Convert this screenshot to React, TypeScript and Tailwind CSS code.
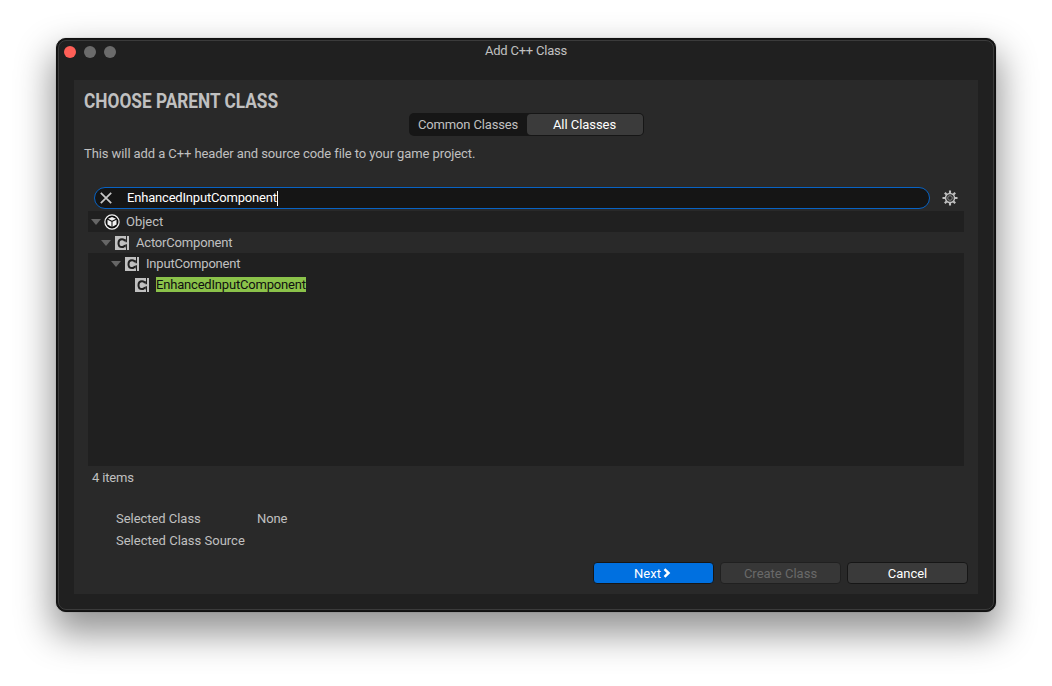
import React from "react";

function ComponentIcon() {
  return (
    <svg width="14" height="14" viewBox="0 0 14 14" className="block shrink-0">
      <path fill="#c0c0c0" d="M0 0H11V3H10.4V11.4H11V14H0Z" />
      <path fill="none" stroke="#202020" strokeWidth="2" d="M10 5.2C9.6 3.8 8.6 3.2 7 3.2C4.8 3.2 3.5 4.6 3.5 7.2S4.8 11.1 7 11.1C8.6 11.1 9.6 10.4 10 9" />
      <path fill="#c0c0c0" d="M12 0H14V14H12V8.3H8.5V6.2H12Z" />
    </svg>
  );
}

function ObjectIcon() {
  return (
    <svg width="16" height="16" viewBox="0 0 16 16" className="block shrink-0">
      <circle cx="8" cy="8" r="7.1" fill="#0c0c0c" stroke="#f2f2f2" strokeWidth="1.2" />
      <path fill="#f2f2f2" d="M8 3L12 4.8L8 6.8L4 4.8ZM3.5 5.8L7.5 7.8V12.8L3.5 10.6ZM12.5 5.8L8.5 7.8V12.8L12.5 10.6Z" />
    </svg>
  );
}

function Arrow() {
  return (
    <svg width="10" height="6" viewBox="0 0 10 6" className="block shrink-0">
      <path d="M0 0H10L5 6Z" fill="#666666" />
    </svg>
  );
}

function Gear() {
  return (
    <svg width="16" height="16" viewBox="0 0 16 16" className="block">
      <g stroke="#c0c0c0" strokeWidth="2.1">
        <path d="M8 .5V3.5M8 12.5V15.5M.5 8H3.5M12.5 8H15.5M2.8 2.8L4.8 4.8M11.2 11.2L13.2 13.2M13.2 2.8L11.2 4.8M4.8 11.2L2.8 13.2" />
      </g>
      <circle cx="8" cy="8" r="4.5" fill="#292929" stroke="#c0c0c0" strokeWidth="1.5" />
      <circle cx="8" cy="8" r="2.3" fill="none" stroke="#8a8a8a" strokeWidth="1" />
    </svg>
  );
}

export default function App() {
  return (
    <div className="h-[686px] w-[1052px] overflow-hidden bg-white px-14 pt-[38px] font-['Roboto',sans-serif] text-[13px] leading-[21px] tracking-normal text-[#c0c0c0]">
      <div className="h-[574px] w-[940px] rounded-[10px] border border-[#101010] bg-[#151515] p-px shadow-[0_0_1px_rgba(0,0,0,0.5),0_18px_36px_4px_rgba(0,0,0,0.42)]">
        <div className="flex h-[570px] flex-col rounded-[8px] border border-[#3b3b3b] bg-[#202020]">
          <header className="flex h-[39px] shrink-0 items-start">
            <div className="flex w-[200px] gap-2 pt-[5px] pl-[5px]">
              <span className="size-3 rounded-full bg-[#ff5f57]" />
              <span className="size-3 rounded-full bg-[#6b6b6b]" />
              <span className="size-3 rounded-full bg-[#6b6b6b]" />
            </div>
            <div className="flex-1 text-center leading-[19px] tracking-[-0.22px]">Add C++ Class</div>
            <div className="w-[200px]" />
          </header>
          <main className="mx-[15px] flex h-[514px] w-[904px] flex-col bg-[#292929]">
            <h1 className="ml-[10px] h-[33px] w-[260px] origin-left scale-x-[0.863] pt-[10px] text-[20px] leading-[22px] font-bold whitespace-nowrap">CHOOSE PARENT CLASS</h1>
            <div className="ml-[335px] flex h-[23px] w-[235px] rounded-[5px] bg-[#161616] p-px leading-[21px]">
              <div className="w-[117px] pr-px text-center tracking-[-0.14px]">Common Classes</div>
              <div className="w-[116px] rounded-[4px] bg-[#3b3b3b] pr-px text-center tracking-[-0.05px] text-white">All Classes</div>
            </div>
            <p className="mt-[7px] h-[21px] pl-[10px] tracking-[-0.09px]">This will add a C++ header and source code file to your game project.</p>
            <div className="mt-[23px] ml-5 flex h-[22px] items-center">
              <div className="flex h-[22px] w-[836px] items-center rounded-full border border-[#0863c4] bg-[#151515] pl-[5px] text-white">
                <svg width="12" height="12" viewBox="0 0 12 12" className="block">
                  <path d="M.8.8L11.2 11.2M11.2.8L.8 11.2" stroke="#c8c8c8" strokeWidth="1.7" />
                </svg>
                <span className="ml-[15px] h-[21px] leading-[19px] tracking-[-0.19px]">EnhancedInputComponent</span>
                <span className="h-[15px] w-px bg-white" />
              </div>
              <div className="ml-3"><Gear /></div>
            </div>
            <div className="mt-[2px] ml-[14px] h-[255px] w-[876px] bg-[#202020]">
              <div className="flex h-[21px] items-center pl-[3px]">
                <Arrow /><span className="ml-[2.5px]"><ObjectIcon /></span><span className="ml-[6.5px]">Object</span>
              </div>
              <div className="flex h-[21px] items-center bg-[#292929] pl-[13px]">
                <Arrow /><span className="ml-1"><ComponentIcon /></span><span className="ml-[7px] tracking-[-0.18px]">ActorComponent</span>
              </div>
              <div className="flex h-[21px] items-center pl-[23px]">
                <Arrow /><span className="ml-1"><ComponentIcon /></span><span className="ml-[7px] tracking-[-0.18px]">InputComponent</span>
              </div>
              <div className="flex h-[21px] items-center pl-[47px]">
                <ComponentIcon /><span className="ml-[7px] h-[15px] bg-[#8bc24a] leading-[15px] tracking-[-0.19px] text-[#101010]">EnhancedInputComponent</span>
              </div>
            </div>
            <div className="mt-px h-[21px] pl-[18px] tracking-[-0.16px]">4 items</div>
            <div className="mt-[20px] flex h-[22px] pl-[42px]"><span className="w-[141px] tracking-[-0.04px]">Selected Class</span><span className="tracking-[-0.1px]">None</span></div>
            <div className="h-[22px] pl-[42px]">Selected Class Source</div>
            <div className="mt-[10px] flex h-[22px] justify-end gap-[6px] pr-[10px] text-center leading-[22px] text-white">
              <div className="flex w-[121px] items-center justify-center rounded-[4px] border border-[#161616] bg-[#0070e0] pr-[2px]">
                <span className="h-5">Next</span>
                <svg width="8" height="10" viewBox="0 0 8 10" className="ml-[2px] block"><path d="M1.5 1.2L5.5 5L1.5 8.8" fill="none" stroke="white" strokeWidth="2.5" /></svg>
              </div>
              <div className="w-[121px] rounded-[4px] border border-[#202020] bg-[#373737] text-[#696969]">Create Class</div>
              <div className="w-[121px] rounded-[4px] border border-[#161616] bg-[#3a3a3a]">Cancel</div>
            </div>
          </main>
        </div>
      </div>
    </div>
  );
}
